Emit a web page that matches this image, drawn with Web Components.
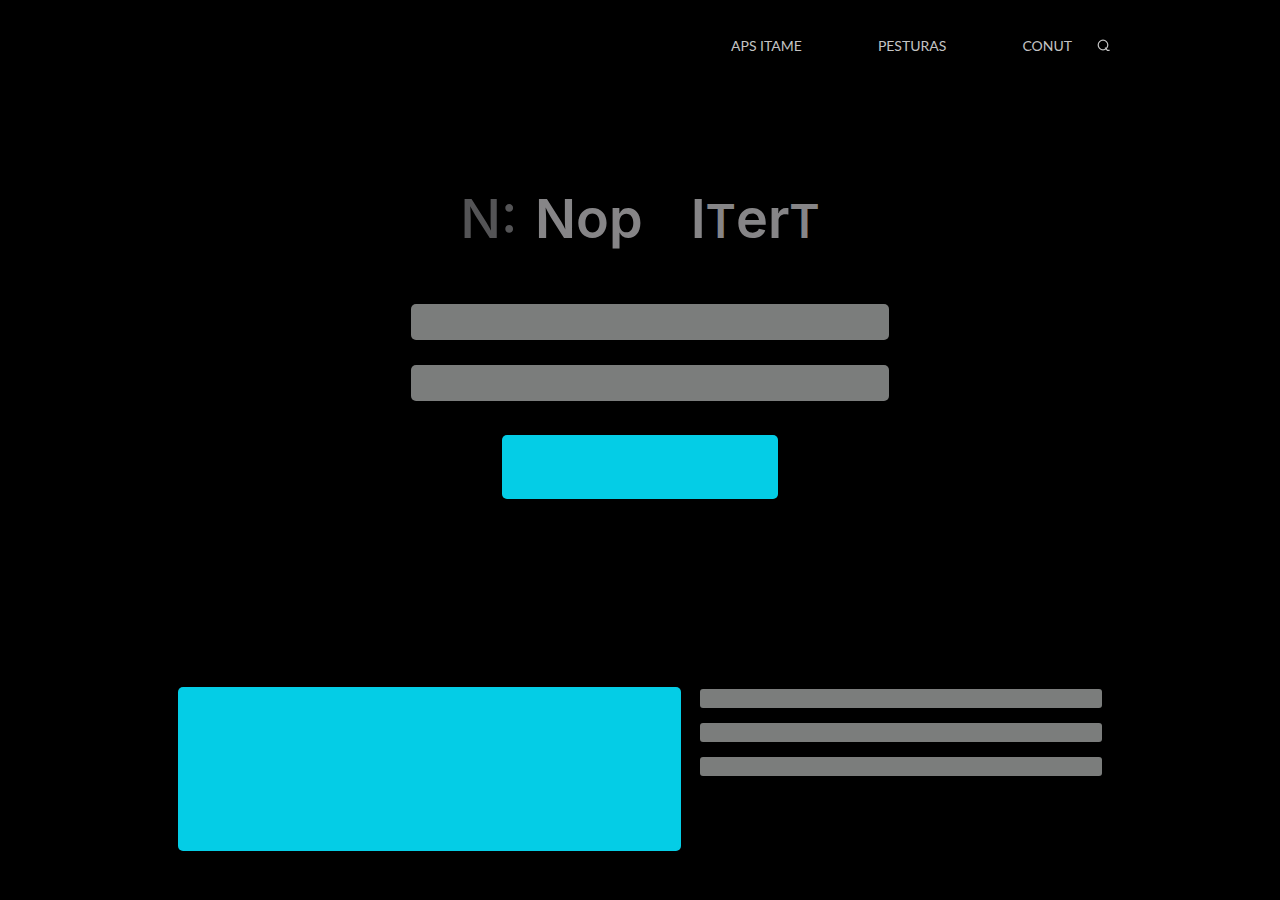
<!DOCTYPE html>
<html lang="en">
<head>
<meta charset="utf-8">
<meta name="viewport" content="width=device-width, initial-scale=1">
<title>N: Nop ITerT</title>
<style>
    body {
        margin: 0;
        background: #000;
        color: #c4c4c4;
        font-family: Lato, "Open Sans", sans-serif;
        --grey: #7b7d7c;
        --accent: #04cde6;
    }
</style>
</head>
<body>
<site-header>
    <nav-link href="#apsitame">APS ITAME</nav-link>
    <nav-link href="#pesturas">PESTURAS</nav-link>
    <nav-link href="#conut">CONUT</nav-link>
</site-header>
<main>
    <hero-form></hero-form>
    <feature-row>
        <text-lines count="3"></text-lines>
    </feature-row>
</main>

<script>
class SiteHeader extends HTMLElement {
    connectedCallback(){
        this.attachShadow({ mode: 'open' });
        this.shadowRoot.innerHTML = `
            <style>
                :host { display: block; }
                header {
                    display: flex;
                    justify-content: flex-end;
                    align-items: center;
                    gap: 25px;
                    height: 90px;
                    max-width: 940px;
                    margin: 0 auto;
                }
                nav { display: flex; gap: 76px; }
                button {
                    display: flex;
                    padding: 0;
                    border: 0;
                    background: none;
                    color: inherit;
                }
            </style>
            <header>
                <nav><slot></slot></nav>
                <button type="button" aria-label="Search">
                    <svg width="13" height="13" viewBox="0 0 13 13" fill="none" stroke="currentColor" stroke-width="1.2">
                        <circle cx="6" cy="6" r="4.8"/>
                        <path d="M8 8.6 L10.4 11.4 H12.6"/>
                    </svg>
                </button>
            </header>
        `;
    }
}

class NavLink extends HTMLElement {
    connectedCallback(){
        this.attachShadow({ mode: 'open' });
        this.shadowRoot.innerHTML = `
            <style>
                :host { display: block; }
                a {
                    color: inherit;
                    font-size: 14px;
                    line-height: 20px;
                    text-decoration: none;
                    white-space: nowrap;
                }
            </style>
            <a href="${this.getAttribute('href')}"><slot></slot></a>
        `;
    }
}

class HeroForm extends HTMLElement {
    connectedCallback(){
        this.attachShadow({ mode: 'open' });
        this.shadowRoot.innerHTML = `
            <style>
                :host { display: block; padding: 98px 20px 0; }
                h1 {
                    display: flex;
                    justify-content: center;
                    align-items: baseline;
                    gap: 48px;
                    margin: 0 0 54px;
                    color: #868587;
                    font: 600 54px/62px Inter, "Open Sans", sans-serif;
                }
                .dim { margin-right: 4px; color: #545456; font-weight: 500; }
                small { font-size: 46px; line-height: 1; }
                form {
                    display: flex;
                    flex-direction: column;
                    align-items: center;
                }
                .fields {
                    display: flex;
                    flex-direction: column;
                    gap: 25px;
                    box-sizing: border-box;
                    width: 100%;
                    max-width: 498px;
                    padding-left: 20px;
                    margin-bottom: 34px;
                }
                input, button {
                    box-sizing: border-box;
                    width: 100%;
                    border: 0;
                    border-radius: 5px;
                }
                input {
                    height: 36px;
                    padding: 0 12px;
                    background: var(--grey);
                    font-size: 14px;
                }
                button {
                    max-width: 276px;
                    height: 64px;
                    background: var(--accent);
                }
            </style>
            <h1><span><span class="dim">N:</span> Nop</span> <span>I<small>T</small>er<small>T</small></span></h1>
            <form>
                <div class="fields">
                    <input type="text" aria-label="First field">
                    <input type="text" aria-label="Second field">
                </div>
                <button type="button" aria-label="Submit"></button>
            </form>
        `;
    }
}

class FeatureRow extends HTMLElement {
    connectedCallback(){
        this.attachShadow({ mode: 'open' });
        this.shadowRoot.innerHTML = `
            <style>
                :host { display: block; padding: 188px 20px 48px; }
                section {
                    display: grid;
                    grid-template-columns: 5fr 4fr;
                    gap: 19px;
                    max-width: 924px;
                    margin: 0 auto;
                }
                .panel {
                    height: 164px;
                    border-radius: 5px;
                    background: var(--accent);
                }
            </style>
            <section>
                <div class="panel"></div>
                <slot></slot>
            </section>
        `;
    }
}

class TextLines extends HTMLElement {
    connectedCallback(){
        const count = Number(this.getAttribute('count'));
        this.attachShadow({ mode: 'open' });
        this.shadowRoot.innerHTML = `
            <style>
                :host {
                    display: flex;
                    flex-direction: column;
                    gap: 15px;
                    padding-top: 2px;
                }
                div {
                    height: 19px;
                    border-radius: 3px;
                    background: var(--grey);
                }
            </style>
            ${'<div></div>'.repeat(count)}
        `;
    }
}

customElements.define('site-header', SiteHeader);
customElements.define('nav-link', NavLink);
customElements.define('hero-form', HeroForm);
customElements.define('feature-row', FeatureRow);
customElements.define('text-lines', TextLines);
</script>
</body>
</html>
